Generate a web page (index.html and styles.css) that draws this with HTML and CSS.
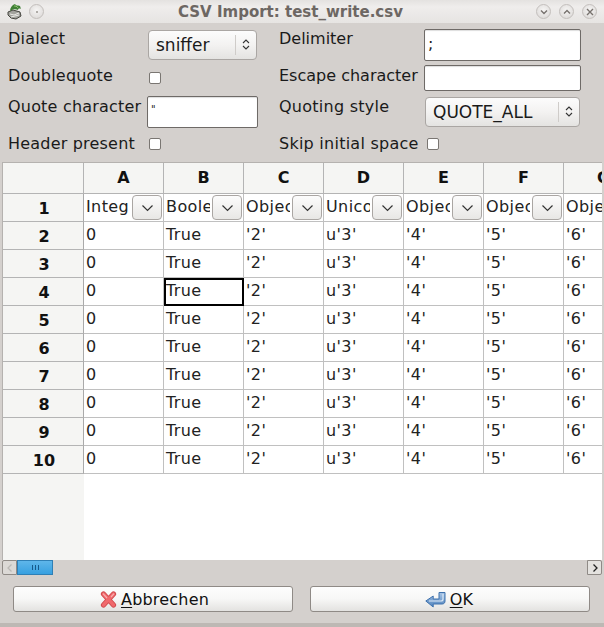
FILE: index.html
```html
<!DOCTYPE html>
<html lang="en">
<head>
<meta charset="utf-8">
<title>CSV Import</title>
<link rel="stylesheet" href="styles.css">
</head>
<body>
<div class="window">
  <header class="titlebar">
    <div class="tb-left">
      <svg class="app-icon" width="15" height="17" viewBox="0 0 15 17"><path d="M1 9l5-2 7 2 1 4-5 3-5-1-3-3z" fill="#a3a39e" stroke="#45453f"/><path d="M3 11l4 1 5-2M4 14l4-1 4-1" stroke="#ecece8" fill="none"/><path d="M3 8c0-3 2-6 5-7 1 2 3 1 5 2l1 3c-2-1-3 0-3 1-2-1-5-1-8 1z" fill="#3f7f35"/><path d="M7 3c1 0 3 0 4 2" stroke="#8fc46f" fill="none"/></svg>
      <span class="wbtn wbtn-dot"><i></i></span>
    </div>
    <div class="tb-title">CSV Import: test_write.csv</div>
    <div class="tb-right">
      <span class="wbtn"><svg width="10" height="10" viewBox="0 0 10 10"><path d="M2 3.5l3 3 3-3" fill="none" stroke="#77726e" stroke-width="1.4"/></svg></span>
      <span class="wbtn"><svg width="10" height="10" viewBox="0 0 10 10"><path d="M2 6.5l3-3 3 3" fill="none" stroke="#77726e" stroke-width="1.4"/></svg></span>
      <span class="wbtn"><svg width="10" height="10" viewBox="0 0 10 10"><path d="M2 2l6 6M8 2l-6 6" fill="none" stroke="#77726e" stroke-width="1.4"/></svg></span>
    </div>
  </header>

  <section class="form">
    <div class="row row-1">
      <label class="lab lab-a top">Dialect</label>
      <div class="fld-a"><div class="combo combo-a"><span class="combo-text">sniffer</span><span class="spin"><svg width="8" height="13" viewBox="0 0 8 13"><path d="M1 5l3-3 3 3M1 8l3 3 3-3" fill="none" stroke="#333" stroke-width="1.1"/></svg></span></div></div>
      <label class="lab lab-b top">Delimiter</label>
      <div class="fld-b"><div class="input input-tall">;</div></div>
    </div>
    <div class="row row-2">
      <label class="lab lab-a">Doublequote</label>
      <div class="fld-a"><span class="check"></span></div>
      <label class="lab lab-b">Escape character</label>
      <div class="fld-b"><div class="input input-short"></div></div>
    </div>
    <div class="row row-3">
      <label class="lab lab-a top">Quote character</label>
      <div class="fld-a"><div class="input input-tall input-q">"</div></div>
      <label class="lab lab-b lab-wide top">Quoting style</label>
      <div class="fld-b"><div class="combo combo-b"><span class="combo-text">QUOTE_ALL</span><span class="spin"><svg width="8" height="13" viewBox="0 0 8 13"><path d="M1 5l3-3 3 3M1 8l3 3 3-3" fill="none" stroke="#333" stroke-width="1.1"/></svg></span></div></div>
    </div>
    <div class="row row-4">
      <label class="lab lab-a">Header present</label>
      <div class="fld-a"><span class="check"></span></div>
      <label class="lab lab-b lab-wide">Skip initial space</label>
      <div class="fld-b"><span class="check check-b"></span></div>
    </div>
  </section>

  <section class="table-wrap">
    <div class="grid" id="grid"></div>
    <div class="scrollbar">
      <span class="sb-btn"><svg width="8" height="10" viewBox="0 0 8 10"><path d="M5.5 1.5L2 5l3.5 3.5" fill="none" stroke="#bbb8b5" stroke-width="1.3"/></svg></span>
      <span class="sb-thumb"><i></i><i></i><i></i></span>
      <span class="sb-track"></span>
      <span class="sb-btn sb-btn-r"><svg width="8" height="10" viewBox="0 0 8 10"><path d="M2.5 1.5L6 5 2.5 8.5" fill="none" stroke="#222" stroke-width="1.3"/></svg></span>
    </div>
  </section>

  <footer class="buttons">
    <button class="btn btn-cancel" type="button">
      <svg class="ico-x" width="17" height="17" viewBox="0 0 17 17"><path d="M3.5 3l10 11M13.5 3l-10 11" fill="none" stroke="#cf4a4d" stroke-width="5.2" stroke-linecap="round"/><path d="M3.5 3l10 11M13.5 3l-10 11" fill="none" stroke="#f0696c" stroke-width="3.4" stroke-linecap="round"/><path d="M3 2.6l4 4.4M14 2.6l-3 3.4" fill="none" stroke="#f9aeb0" stroke-width="1.2"/></svg>
      <span class="btn-text"><u>A</u>bbrechen</span>
    </button>
    <button class="btn btn-ok" type="button">
      <svg class="ico-ok" width="21" height="17" viewBox="0 0 21 17"><defs><linearGradient id="ok" x1="0" y1="0" x2="0" y2="1"><stop offset="0" stop-color="#a9c6e6"/><stop offset="1" stop-color="#4f82bd"/></linearGradient></defs><path d="M.8 10L8.2 5v3H14V1.5h6V10c0 1.8-1 3-3 3H8.2v3z" fill="url(#ok)" stroke="#3f72ad"/><path d="M4 10h12c1 0 2-.6 2-2V3" fill="none" stroke="#dbe8f5" stroke-width="1.2"/></svg>
      <span class="btn-text"><u>O</u>K</span>
    </button>
  </footer>
</div>
<script src="grid.js"></script>
</body>
</html>
```

FILE: grid.js
```js
var cols = ["A","B","C","D","E","F","G"];
var heads = ["Integ","Boole","Objec","Unico","Objec","Objec","Obje"];
var vals = ["0","True","'2'","u'3'","'4'","'5'","'6'"];
var html = '<div class="hc corner"></div>';
cols.forEach(function (c) { html += '<div class="hc">' + c + '</div>'; });
html += '<div class="rh">1</div>';
heads.forEach(function (h, i) {
  html += '<div class="cell cell-h"><span class="cell-clip">' + h + '</span>';
  if (i < 6) {
    html += '<span class="mini"><svg width="13" height="8" viewBox="0 0 13 8"><path d="M1.5 1.5L6.5 6.5 11.5 1.5" fill="none" stroke="#333" stroke-width="1.2"/></svg></span>';
  }
  html += '</div>';
});
for (var r = 2; r <= 10; r++) {
  html += '<div class="rh">' + r + '</div>';
  vals.forEach(function (v, i) {
    var sel = r === 4 && i === 1 ? ' sel' : '';
    html += '<div class="cell' + sel + '">' + v + '</div>';
  });
}
document.getElementById("grid").innerHTML = html;
```

FILE: styles.css
```css
* { box-sizing: border-box; }
html, body { margin: 0; padding: 0; }
body { width: 604px; height: 627px; overflow: hidden; background: #d4d0cd; font-family: "DejaVu Sans", sans-serif; font-size: 16px; color: #1a1a1a; }
.window { width: 604px; height: 627px; display: flex; flex-direction: column; background: #d4d0cd; border-bottom: 4px solid #bdb8b4; }

.titlebar { height: 23px; flex: none; display: flex; align-items: center; justify-content: space-between; position: relative; padding: 0 7px 0 7px; background: linear-gradient(#e4e2e0, #efedec 30%, #e6e4e2); }
.tb-left, .tb-right { display: flex; align-items: center; gap: 7px; }
.tb-right { gap: 8px; }
.app-icon { display: block; }
.tb-title { position: absolute; left: 0; right: 23px; text-align: center; font-weight: bold; font-size: 15px; color: #6d6763; font-family: "DejaVu Sans", sans-serif; pointer-events: none; }
.wbtn { width: 15px; height: 15px; border-radius: 50%; border: 1px solid #c3bfbc; background: radial-gradient(circle at 50% 40%, #f6f5f4, #d9d6d4); display: flex; align-items: center; justify-content: center; }
.wbtn-dot i { width: 2px; height: 2px; border-radius: 50%; background: #99948f; }

.form { flex: none; height: 139px; padding: 5px 2px 0 8px; display: flex; flex-direction: column; }
.row { display: grid; grid-template-columns: 139px 132px 145px 158px; align-items: center; }
.row-1 { height: 33px; }
.row-2 { height: 33px; }
.row-3 { height: 35px; }
.row-4 { height: 30px; }
.lab { white-space: nowrap; line-height: 20px; }
.lab.top { align-self: start; padding-top: 1px; }
.row-2 .lab { position: relative; top: -2px; }
.row-3 .lab-a { padding-top: 3px; }
.row-3 .lab-b { padding-top: 3px; }
.lab-a { letter-spacing: 0.2px; }
.lab-wide { letter-spacing: 0.25px; }
.fld-a, .fld-b { display: flex; align-items: center; }
.input { background: #fff; border: 1px solid #6e6a67; border-radius: 2px; width: 157px; padding: 0 3px; font-size: 16px; line-height: 28px; box-shadow: inset 0 1px 1px #ddd; }
.input-tall { height: 32px; }
.input-short { height: 26px; }
.input-q { width: 111px; margin-left: 0; font-size: 10px; line-height: 26px; height: 32px; }
.fld-a .combo { margin-left: 1px; }
.fld-b .combo { margin-left: 1px; }
.combo { height: 30px; font-size: 17px; display: flex; align-items: center; justify-content: space-between; border: 1px solid #aaa6a3; border-radius: 4px; background: linear-gradient(#fcfcfc, #f3f2f1 50%, #e4e3e1); padding-left: 7px; }
.combo-a { width: 109px; }
.combo-b { width: 155px; }
.combo-text { line-height: 28px; padding-top: 1px; }
.spin { width: 20px; height: 20px; border-left: 1px solid #cfccc9; display: flex; align-items: center; justify-content: center; margin-right: 1px; }
.check { width: 12px; height: 12px; display: block; margin-left: 2px; background: #fff; border: 1px solid #7a7672; border-radius: 2px; }
.check-b { margin-left: 3px; }

.table-wrap { flex: none; padding-left: 2px; display: flex; flex-direction: column; }
.grid { width: 600px; height: 398px; border-top: 1px solid #b5b2af; border-left: 1px solid #b5b2af; overflow: hidden; display: grid; grid-template-columns: 81px repeat(7, 80px); grid-template-rows: 31px repeat(10, 28px); align-content: start; background: linear-gradient(90deg, #f5f5f3 81px, #fff 81px); }
.hc { background: #f5f5f3; font-weight: bold; text-align: center; font-size: 16px; line-height: 30px; border-right: 1px solid #b4b4b4; border-bottom: 1px solid #b4b4b4; color: #111; }
.rh { background: #f5f5f3; font-weight: bold; text-align: center; font-size: 16px; line-height: 29px; border-right: 1px solid #aaa; border-bottom: 1px solid #b4b4b4; color: #111; padding-left: 2px; }
.cell { background: #fff; font-size: 16px; letter-spacing: 0.4px; line-height: 26px; padding-left: 2px; border-right: 1px solid #c0c0c0; border-bottom: 1px solid #c0c0c0; white-space: nowrap; overflow: hidden; color: #222; }
.cell-h { display: flex; align-items: flex-start; padding-right: 1px; }
.cell-clip { flex: 1; min-width: 0; overflow: hidden; line-height: 26px; margin-right: 2px; }
.mini { flex: none; width: 30px; height: 25px; border: 1px solid #aaa6a3; border-radius: 4px; background: linear-gradient(#fcfcfc, #e8e7e5); display: flex; align-items: center; justify-content: center; margin-top: 1px; }
.cell.sel { border: 2px solid #000; padding-left: 0; line-height: 22px; }

.scrollbar { width: 600px; height: 15px; display: flex; background: #d4d0cd; }
.sb-btn { width: 15px; height: 15px; border: 1px solid #8f8a86; background: #dcd9d6; display: flex; align-items: center; justify-content: center; flex: none; border-radius: 2px 0 0 2px; }
.sb-btn-r { background: #e4e2df; border-radius: 0 2px 2px 0; }
.sb-thumb { width: 36px; flex: none; background: linear-gradient(#5fb6ea, #37a0e0); border: 1px solid #2f7fb5; display: flex; align-items: center; justify-content: center; gap: 2px; }
.sb-thumb i { width: 1px; height: 5px; background: #16598a; }
.sb-track { flex: 1; }

.buttons { flex: 1; display: flex; justify-content: space-between; align-items: flex-start; padding: 11px 14px 0 13px; }
.btn { width: 280px; height: 26px; display: flex; align-items: center; justify-content: center; gap: 4px; font-family: "DejaVu Sans", sans-serif; font-size: 16px; color: #111; border: 1px solid #8f8a86; border-radius: 3px; background: linear-gradient(#fdfdfd, #f7f7f6 50%, #e3e2e0); padding: 0; }
.btn-cancel { padding-left: 3px; }
.btn-ok { padding-right: 2px; }
.btn-text { letter-spacing: 0.2px; }
.btn-text u { text-underline-offset: 2px; }
```
